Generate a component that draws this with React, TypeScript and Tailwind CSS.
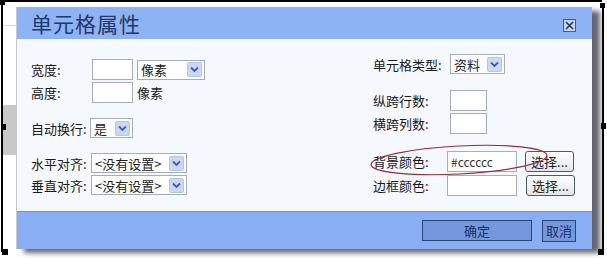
import React from "react";

const font = { fontFamily: '"Noto Sans CJK SC", "Noto Sans", sans-serif' };

function Arrow() {
  return (
    <span className="flex h-[15px] w-[15px] items-center justify-center rounded-[2px] bg-[#c9d9f5] border border-[#b3c6ea]">
      <svg width="9" height="7" viewBox="0 0 9 7">
        <path d="M1 1.5 L4.5 5 L8 1.5" fill="none" stroke="#3a5fb0" strokeWidth="1.8" />
      </svg>
    </span>
  );
}

function Select({ w, text }: { w: string; text: string }) {
  return (
    <div className={`flex h-[20px] ${w} items-center justify-between border border-[#a3adbb] bg-white pl-[3px] pr-[2px]`}>
      <span className="text-[13px] leading-none text-[#222]">{text}</span>
      <Arrow />
    </div>
  );
}

function Input({ w }: { w: string }) {
  return <div className={`h-[21px] ${w} border border-[#a3adbb] bg-white`} />;
}

function Label({ w, children }: { w: string; children: React.ReactNode }) {
  return <span className={`${w} shrink-0 text-[13px] leading-none text-[#1a1a1a]`}>{children}</span>;
}

function ChooseBtn() {
  return (
    <div className="flex h-[21px] w-[49px] items-center justify-center rounded-[3px] border border-[#505860] bg-gradient-to-b from-white to-[#e2e6ec] text-[13px] leading-none text-[#222]">
      选择...
    </div>
  );
}

export default function App() {
  return (
    <div className="relative h-[258px] w-[607px] overflow-hidden bg-white" style={font}>
      {/* page behind */}
      <div className="absolute left-[3px] top-[25px] h-px w-[14px] bg-[#d8d8d8]" />
      <div className="absolute left-[3px] top-[105px] h-[50px] w-[14px] bg-[#c8c8c8]" />
      {/* selection frame */}
      <div className="absolute left-0 top-0 h-[2px] w-[602px] bg-black" />
      <div className="absolute left-[1px] top-0 h-[252px] w-[2px] bg-black" />
      <div className="absolute left-[602px] top-[5px] h-[246px] w-[2px] bg-black" />
      <div className="absolute left-0 top-0 h-[5px] w-[5px] bg-black" />
      <div className="absolute left-[600px] top-[3px] h-[5px] w-[5px] bg-black" />
      <div className="absolute left-[1px] top-[124px] h-[6px] w-[5px] bg-black" />
      <div className="absolute left-[601px] top-[123px] h-[6px] w-[5px] bg-black" />
      <div className="absolute left-[2px] top-[249px] h-[6px] w-[6px] bg-black" />
      <div className="absolute left-[598px] top-[249px] h-[6px] w-[6px] bg-black" />

      <div className="pl-[16px] pt-[7px]">
        <div className="flex w-[576px] flex-col border-l border-[#c4c8d0] shadow-[8px_4px_5px_rgba(50,50,60,0.75)]">
          {/* title */}
          <div className="flex h-[32px] items-center justify-between bg-[#8eb3f5] pl-[14px] pr-[16px]">
            <span className="text-[21px] font-normal leading-none tracking-[1px] text-[#22386a]">单元格属性</span>
            <span className="mt-[4px] flex h-[13px] w-[13px] items-center justify-center border border-[#4d5c7c] bg-[#c3d3f2]">
              <svg width="9" height="9" viewBox="0 0 9 9">
                <path d="M1 1 L8 8 M8 1 L1 8" stroke="#2c3650" strokeWidth="1.6" />
              </svg>
            </span>
          </div>
          {/* body */}
          <div className="relative flex h-[172px] justify-between bg-[#f5f8fd] pl-[14px] pr-[16px]">
            <div className="flex flex-col pt-[20px]">
              <div className="flex items-center">
                <Label w="w-[61px]">宽度:</Label>
                <Input w="w-[41px]" />
                <div className="ml-[4px]">
                  <Select w="w-[68px]" text="像素" />
                </div>
              </div>
              <div className="mt-[2px] flex items-center">
                <Label w="w-[61px]">高度:</Label>
                <Input w="w-[41px]" />
                <span className="ml-[4px] text-[13px] leading-none text-[#1a1a1a]">像素</span>
              </div>
              <div className="mt-[15px] flex items-center">
                <Label w="w-[59px]">自动换行:</Label>
                <Select w="w-[43px]" text="是" />
              </div>
              <div className="mt-[15px] flex items-center">
                <Label w="w-[60px]">水平对齐:</Label>
                <Select w="w-[96px]" text="<没有设置>" />
              </div>
              <div className="mt-[2px] flex items-center">
                <Label w="w-[60px]">垂直对齐:</Label>
                <Select w="w-[96px]" text="<没有设置>" />
              </div>
            </div>
            <div className="flex w-[203px] flex-col pt-[15px]">
              <div className="flex items-center">
                <Label w="w-[77px]">单元格类型:</Label>
                <Select w="w-[55px]" text="资料" />
              </div>
              <div className="mt-[16px] flex items-center">
                <Label w="w-[77px]">纵跨行数:</Label>
                <Input w="w-[37px]" />
              </div>
              <div className="mt-[2px] flex items-center">
                <Label w="w-[77px]">横跨列数:</Label>
                <Input w="w-[37px]" />
              </div>
              <div className="mt-[17px] flex items-center">
                <Label w="w-[74px]">背景颜色:</Label>
                <div className="flex h-[21px] w-[70px] items-center border border-[#a3adbb] bg-white pl-[3px] text-[12px] leading-none text-[#333]">
                  #cccccc
                </div>
                <div className="ml-[8px]">
                  <ChooseBtn />
                </div>
              </div>
              <div className="mt-[3px] flex items-center">
                <Label w="w-[74px]">边框颜色:</Label>
                <Input w="w-[70px]" />
                <div className="ml-[9px]">
                  <ChooseBtn />
                </div>
              </div>
            </div>
            {/* annotation ellipse */}
            <svg className="absolute left-[350px] top-[101px]" width="186" height="40" viewBox="0 0 186 40">
              <ellipse cx="92" cy="20" rx="88" ry="14" fill="none" stroke="#9a2b38" strokeWidth="1.2" transform="rotate(-3 92 20)" />
            </svg>
          </div>
          {/* footer */}
          <div className="flex h-[38px] items-center justify-end gap-[10px] border-t border-[#6f92d6] bg-[#89aef3] pr-[16px]">
            <div className="flex h-[21px] w-[110px] items-center justify-center border border-[#27457d] bg-[#7598dd] text-[13px] leading-none text-[#1c2f5c]">
              确定
            </div>
            <div className="flex h-[22px] w-[34px] items-center justify-center border border-[#27457d] bg-[#7598dd] text-[13px] leading-none text-[#1c2f5c]">
              取消
            </div>
          </div>
        </div>
      </div>
    </div>
  );
}
